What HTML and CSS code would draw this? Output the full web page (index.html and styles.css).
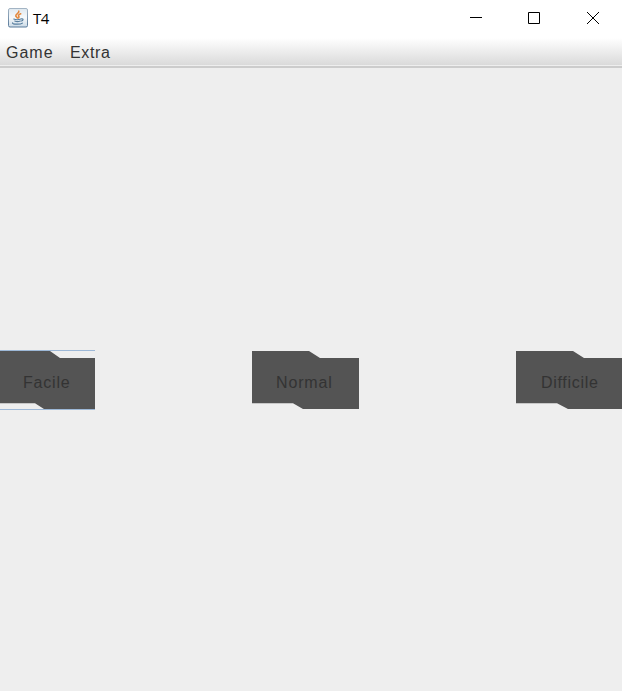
FILE: index.html
```
<!DOCTYPE html>
<html lang="it">
<head>
<meta charset="utf-8">
<title>T4</title>
<link rel="stylesheet" href="styles.css">
</head>
<body>
<header class="titlebar">
  <svg class="app-icon" width="20" height="20" viewBox="0 0 20 20">
    <defs><linearGradient id="tile" x1="0" y1="0" x2="0" y2="1"><stop offset="0" stop-color="#dfe8ef"/><stop offset=".5" stop-color="#f6f9fb"/><stop offset="1" stop-color="#cbdae6"/></linearGradient>
    <linearGradient id="rim" x1="0" y1="0" x2="0" y2="1"><stop offset="0" stop-color="#a3b4c4"/><stop offset="1" stop-color="#58799a"/></linearGradient></defs>
    <rect x=".5" y=".5" width="19" height="18.5" rx="1.5" fill="url(#tile)" stroke="url(#rim)"/>
    <g fill="none" stroke-linecap="round">
      <path d="M10.8 3.2C11.6 5 7.2 6 7.8 7.9C8.1 8.8 9.2 9.2 9.4 10M12.7 5.8C9.8 7 10.4 7.8 10.9 8.5C11.2 9 10.8 9.6 10.4 10" stroke="#e3873c" stroke-width="1.6"/>
      <path d="M5.8 11C7.5 11.8 11 11.7 12.8 11M6.8 13C8.3 13.7 10.8 13.6 12.3 13M13.4 10.8C15.9 10.3 15.2 12.8 13.4 13M4.6 14.9C3.6 16.5 12.8 16.6 14.4 15.1" stroke="#587f9f" stroke-width="1.2"/>
    </g>
  </svg>
  <span class="title">T4</span>
  <nav class="controls">
    <svg width="58" height="36" viewBox="0 0 58 36"><path d="M23 17.5h12"/></svg>
    <svg width="58" height="36" viewBox="0 0 58 36"><path d="M23.5 12.5h11v11h-11z"/></svg>
    <svg class="close" width="58" height="36" viewBox="0 0 58 36"><path d="M24 12l12 12M36 12l-12 12"/></svg>
  </nav>
</header>
<nav class="menubar">
  <span class="game">Game</span>
  <span class="extra">Extra</span>
</nav>
<main class="content">
  <button class="level focused">
    <svg width="95" height="58" viewBox="0 0 95 58"><path d="M0 0H50L60 7H95V58H44L35 52.3H0z"/></svg>
    <span class="facile">Facile</span>
  </button>
  <button class="level">
    <svg width="107" height="58" viewBox="0 0 107 58"><path d="M0 0H57L68 7H107V58H51L41 52.3H0z"/></svg>
    <span class="normal">Normal</span>
  </button>
  <button class="level">
    <svg width="106" height="58" viewBox="0 0 106 58"><path d="M0 0H57L68 7H106V58H52L41 52.3H0z"/></svg>
    <span class="difficile">Difficile</span>
  </button>
</main>
</body>
</html>
```
FILE: styles.css
```
body {
  margin: 0;
  height: 691px;
  display: flex;
  flex-direction: column;
  overflow: hidden;
  background: #eee;
  color: #333;
  font-family: "Liberation Sans", Arial, sans-serif;
}

.titlebar {
  display: flex;
  align-items: flex-start;
  height: 38px;
  padding-left: 8px;
  background: #fff;
}

.app-icon {
  margin-top: 8px;
}

.title {
  margin: 9px 0 0 5px;
  font: 15px/18px "Open Sans", sans-serif;
  letter-spacing: -.4px;
  color: #000;
}

.controls {
  display: flex;
  margin-left: auto;
}

.controls path {
  fill: none;
  stroke: #000;
}

.controls .close {
  margin-right: 1px;
}

.menubar {
  display: flex;
  box-sizing: border-box;
  height: 30px;
  padding-left: 6px;
  border-bottom: 2px solid #ccc;
  background: linear-gradient(#fff, #dadada 27px, #eee 27px);
  font-size: 16px;
  line-height: 29px;
}

.game {
  width: 64px;
  letter-spacing: 1px;
}

.extra {
  letter-spacing: .65px;
}

.content {
  display: flex;
  flex: 1;
  align-items: center;
  justify-content: space-between;
}

.level {
  display: grid;
  box-sizing: border-box;
  height: 60px;
  padding: 0;
  border: 1px solid transparent;
  border-width: 1px 0;
  background: none;
  color: #333;
  font: 16px/58px "Liberation Sans", Arial, sans-serif;
  text-align: left;
}

.level.focused {
  border-color: #9db8d7;
}

.level > * {
  grid-area: 1 / 1;
}

.level path {
  fill: #545454;
}

.level span {
  z-index: 1;
  margin: 3px 0 -3px;
}

.facile {
  padding-left: 23px;
  letter-spacing: .8px;
}

.normal {
  padding-left: 24px;
  letter-spacing: .85px;
}

.difficile {
  padding-left: 25px;
  letter-spacing: .7px;
}
```
